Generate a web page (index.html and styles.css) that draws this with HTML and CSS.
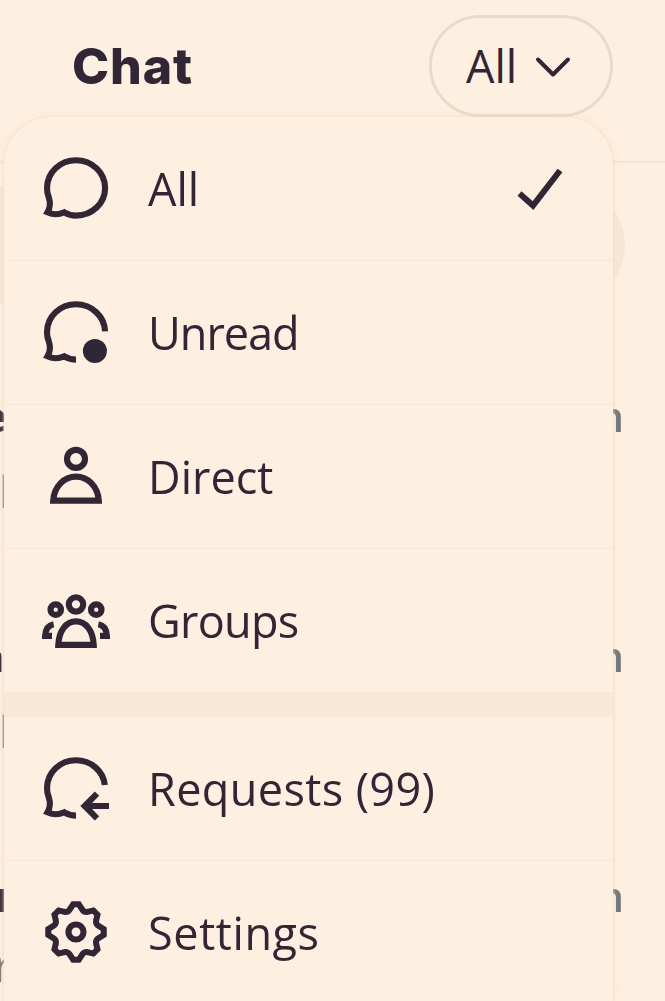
FILE: index.html
```
<!DOCTYPE html>
<html lang="en">

<head>
    <meta charset="UTF-8">
    <meta name="viewport" content="width=device-width, initial-scale=1.0">
    <title>Chat</title>
    <link rel="stylesheet" href="styles.css">
</head>

<body>

    <header class="header">
        <h1 class="title">Chat</h1>
        <button class="filter" type="button">
            <span class="filter-label">All</span>
            <svg class="chevron" viewBox="0 0 36 24"><path d="M3 4.5l15 15 15-15"/></svg>
        </button>
    </header>

    <main class="chats">
        <div class="search"></div>
        <div class="chat">
            <div class="chat-top"><b class="chat-name name-1">e</b><span class="chat-time">m</span></div>
            <div class="chat-text text-1">l</div>
        </div>
        <div class="chat">
            <div class="chat-top"><b class="chat-name name-2">n</b><span class="chat-time">m</span></div>
            <div class="chat-text text-1">l</div>
        </div>
        <div class="chat chat-last">
            <div class="chat-top"><b class="chat-name name-3">r</b><span class="chat-time">m</span></div>
            <div class="chat-text text-3">r</div>
        </div>
    </main>

    <nav class="menu">
        <div class="item">
            <svg class="icon" viewBox="0 0 24 24">
                <path d="M12 2.75C17.4 2.75 21.7 6.9 21.7 12S17.4 21.2 12 21.2c-1.4 0-2.7-.4-3.9-1.1-1.8.8-3.9.8-5.6 0 .9-1.5 1-3.3.4-5.1-.4-1-.6-2-.55-3C2.35 6.9 6.6 2.75 12 2.75z"/>
            </svg>
            <span class="label all">All</span>
            <svg class="check" viewBox="0 0 48 44"><path d="M4.5 26.5L18 38.5 45 3.5"/></svg>
        </div>
        <div class="item">
            <svg class="icon" viewBox="0 0 24 24">
                <path d="M12 21.2c-1.4 0-2.7-.4-3.9-1.1-1.8.8-3.9.8-5.6 0 .9-1.5 1-3.3.4-5.1-.4-1-.6-2-.55-3C2.35 6.9 6.6 2.75 12 2.75c5.3 0 9.5 4 9.7 9.05"/>
                <circle class="solid" cx="18.3" cy="18.3" r="4"/>
            </svg>
            <span class="label unread">Unread</span>
        </div>
        <div class="item">
            <svg class="icon" viewBox="0 0 24 24">
                <circle cx="12" cy="6.3" r="3"/>
                <path d="M4.4 20.2C4.7 15.5 8 12.2 12 12.2s7.3 3.3 7.6 8z"/>
            </svg>
            <span class="label direct">Direct</span>
        </div>
        <div class="item">
            <svg class="icon" viewBox="0 0 24 24">
                <circle cx="12" cy="6.8" r="2.4"/>
                <circle cx="5.25" cy="8.55" r="1.75"/>
                <circle cx="18.75" cy="8.55" r="1.75"/>
                <path d="M6.1 20.3c.2-4.7 2.6-7.85 5.9-7.85s5.7 3.15 5.9 7.85z"/>
                <path d="M4.55 13.4C2.9 13.7 1.8 15.1 1.7 17.3H4M19.45 13.4c1.65.3 2.75 1.7 2.85 3.9H20"/>
            </svg>
            <span class="label groups">Groups</span>
        </div>
        <div class="divider"></div>
        <div class="item">
            <svg class="icon" viewBox="0 0 24 24">
                <path d="M12 21.2c-1.4 0-2.7-.4-3.9-1.1-1.8.8-3.9.8-5.6 0 .9-1.5 1-3.3.4-5.1-.4-1-.6-2-.55-3C2.35 6.9 6.6 2.75 12 2.75c5 0 9.1 3.6 9.6 8.25"/>
                <path d="M19 13.9L14.9 18l4.1 4.1M15 18h8"/>
            </svg>
            <span class="label requests">Requests (99)</span>
        </div>
        <div class="item">
            <svg class="icon" viewBox="0 0 24 24">
                <path class="gear" d="M10.54 1.75h2.92l1.57 2.36c.11.17.32.25.53.21l2.53-.59 2.17 2.17-.58 2.54c-.05.2.04.41.21.53l2.36 1.57v2.92l-2.36 1.57c-.17.12-.26.33-.21.53l.58 2.54-2.17 2.17-2.53-.59c-.21-.04-.42.04-.53.21l-1.57 2.36h-2.92l-1.58-2.36c-.11-.17-.32-.25-.52-.21l-2.54.59-2.17-2.17.58-2.54c.05-.2-.03-.41-.21-.53l-2.35-1.57v-2.92L4.1 8.97c.18-.12.26-.33.21-.53L3.73 5.9 5.9 3.73l2.54.59c.2.04.41-.04.52-.21l1.58-2.36zm1.07 2l-.98 1.47C10.05 6.08 9 6.5 7.99 6.27l-1.46-.34-.6.6.33 1.46c.24 1.01-.18 2.07-1.05 2.64l-1.46.98v.78l1.46.98c.87.57 1.29 1.63 1.05 2.64l-.33 1.46.6.6 1.46-.34c1.01-.23 2.06.19 2.64 1.05l.98 1.47h.78l.97-1.47c.58-.86 1.63-1.28 2.65-1.05l1.45.34.61-.6-.34-1.46c-.23-1.01.18-2.07 1.05-2.64l1.47-.98v-.78l-1.47-.98c-.87-.57-1.28-1.63-1.05-2.64l.34-1.46-.61-.6-1.45.34c-1.02.23-2.07-.19-2.65-1.05l-.97-1.47h-.78z"/>
                <circle cx="12" cy="12" r="2.5"/>
            </svg>
            <span class="label settings">Settings</span>
        </div>
    </nav>

</body>

</html>
```
FILE: styles.css
```
body {
    margin: 0;
    height: 1001px;
    overflow: hidden;
    position: relative;
    background-color: #fef0e1;
    color: #302636;
    font-family: "Open Sans", sans-serif;
}

.header {
    display: flex;
    align-items: flex-start;
    justify-content: space-between;
    box-sizing: border-box;
    height: 163px;
    padding: 15px 52px 0 72px;
    border-bottom: 2px solid #f6e5d5;
}

.title {
    margin: 0;
    font-family: Inter, sans-serif;
    font-size: 50px;
    font-weight: 800;
    line-height: 103px;
    letter-spacing: 0.9px;
}

.filter {
    display: flex;
    align-items: center;
    box-sizing: border-box;
    width: 184px;
    height: 102px;
    padding: 0 0 0 34px;
    border: 3px solid #e9dbc9;
    border-radius: 51px;
    background: none;
    color: inherit;
    font: 45px/60px "Open Sans", sans-serif;
}

.filter-label {
    width: 69px;
    text-align: left;
}

.chevron {
    width: 36px;
    height: 24px;
    margin-top: 1px;
}

.chevron path,
.check path {
    fill: none;
    stroke: #302636;
    stroke-width: 4;
    stroke-linecap: round;
    stroke-linejoin: round;
}

.check path {
    stroke-width: 6;
    stroke-linecap: butt;
    stroke-linejoin: miter;
}

/* chat list behind the menu */
.chats {
    height: 838px;
    overflow: hidden;
    will-change: transform;
}

.search {
    height: 118px;
    margin: 23px 40px 76px -60px;
    border-radius: 59px;
    background-color: #f8e7d8;
}

.chat {
    height: 240px;
}

.chat-top {
    display: flex;
    justify-content: space-between;
    height: 72px;
    padding-right: 41px;
    font-size: 42px;
    line-height: 72px;
}

.chat-time {
    color: #6b7478;
    font-weight: 600;
}

.chat-text {
    color: #7b7471;
    font-size: 43px;
    line-height: 80px;
}

.chat-last {
    height: 140px;
}

.name-1 {
    margin-left: -18px;
}

.name-2 {
    margin-left: -23px;
}

.name-3 {
    margin-left: -4px;
}

.text-1 {
    margin-left: -1px;
}

.text-3 {
    margin-left: -6px;
    line-height: 68px;
}

/* dropdown */
.menu {
    position: absolute;
    top: 117px;
    left: 4px;
    width: 609px;
    height: 884px;
    border-radius: 48px 48px 0 0;
    overflow: hidden;
    background-color: #fef0e1;
    box-shadow: 0 0 3px #ecd9c8, 0 0 14px rgba(240, 205, 175, 0.3);
}

.item {
    display: flex;
    align-items: center;
    box-sizing: border-box;
    height: 144px;
    padding: 0 50px 0 36px;
    border-bottom: 1px solid #f6e6d7;
}

.item:last-child {
    border-bottom-color: transparent;
}

.divider {
    height: 24px;
    background-color: #f9e8d8;
}

.icon {
    width: 72px;
    height: 72px;
    margin: -1px 36px 0 0;
    fill: none;
    stroke: #302636;
    stroke-width: 2.05;
}

.solid,
.gear {
    fill: #302636;
    stroke: none;
}

.label {
    flex: 1;
    padding-top: 1px;
    font-size: 45px;
    line-height: 60px;
}

.unread {
    letter-spacing: -1px;
}

.groups {
    letter-spacing: -0.7px;
}

.requests {
    letter-spacing: 0.4px;
}

.settings {
    letter-spacing: 0.6px;
}

.check {
    width: 48px;
    height: 44px;
}
```
